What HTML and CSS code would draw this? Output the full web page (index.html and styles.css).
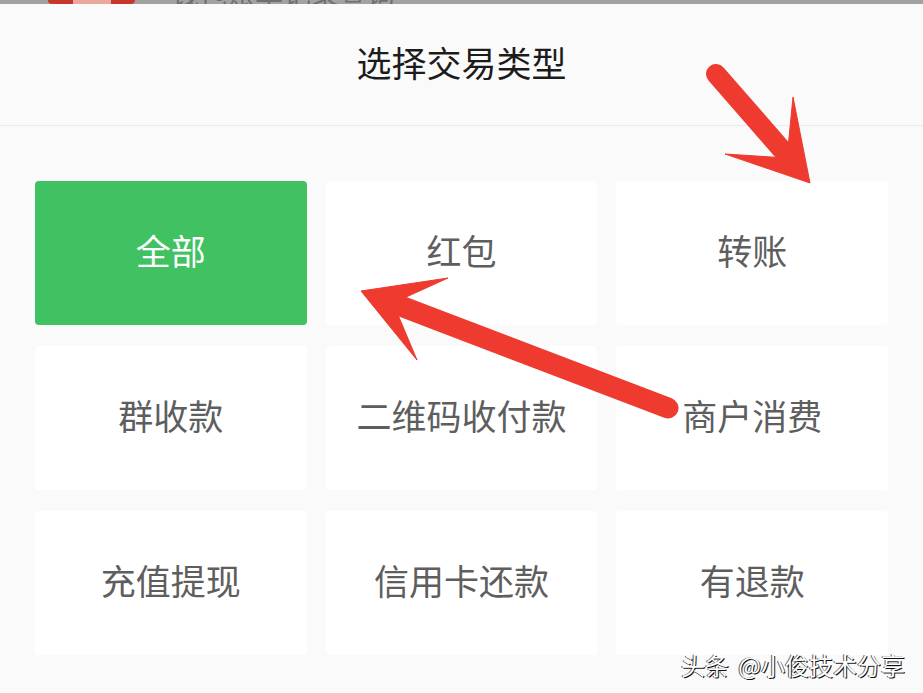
FILE: index.html
```html
<!DOCTYPE html>
<html lang="zh-CN">
<head>
    <meta charset="UTF-8">
    <meta name="viewport" content="width=device-width, initial-scale=1.0">
    <title>选择交易类型</title>
    <link rel="stylesheet" href="styles.css">
</head>
<body>
    <div class="status-strip">
        <div class="app-badge"><span class="app-badge-inner"></span></div>
        <span class="strip-text">钱包账单记录查询</span>
    </div>

    <div class="sheet">
        <div class="sheet-header">
            <h1 class="sheet-title">选择交易类型</h1>
        </div>

        <div class="type-grid">
            <div class="type-cell active">全部</div>
            <div class="type-cell">红包</div>
            <div class="type-cell">转账</div>
            <div class="type-cell">群收款</div>
            <div class="type-cell">二维码收付款</div>
            <div class="type-cell">商户消费</div>
            <div class="type-cell">充值提现</div>
            <div class="type-cell">信用卡还款</div>
            <div class="type-cell">有退款</div>
        </div>
    </div>

    <!-- annotation arrows drawn over the screenshot -->
    <svg class="annotations" viewBox="0 0 923 693" width="923" height="693">
        <g fill="#ee3a2f" stroke="#ee3a2f">
            <line x1="716" y1="74" x2="784" y2="152" stroke-width="20" stroke-linecap="round"/>
            <polygon points="810,183 793,97 787,158 725,154" stroke-width="1" stroke-linejoin="miter"/>
            <line x1="668" y1="408" x2="398" y2="305" stroke-width="21" stroke-linecap="round"/>
            <polygon points="361,291 448,278 393,303 417,360" stroke-width="1" stroke-linejoin="miter"/>
        </g>
    </svg>

    <div class="watermark">头条 @小俊技术分享</div>
</body>
</html>
```

FILE: styles.css
```css
body {
    margin: 0;
    width: 923px;
    height: 693px;
    overflow: hidden;
    position: relative;
    background: #f8f8f8;
    font-family: "Noto Sans CJK SC", "Noto Sans", sans-serif;
}
.status-strip {
    height: 4px;
    background: #a2a2a2;
    overflow: hidden;
    display: flex;
    align-items: flex-end;
    padding-left: 48px;
    gap: 36px;
}
.app-badge {
    flex: none;
    width: 87px;
    height: 30px;
    background: #c7382c;
    border-radius: 4px;
    display: flex;
    justify-content: center;
    align-items: flex-end;
}
.app-badge-inner {
    width: 38px;
    height: 6px;
    background: #e9a7a0;
}
.strip-text {
    font-size: 28px;
    line-height: 28px;
    color: #6f6f6f;
    margin-bottom: -3px;
    white-space: nowrap;
}
.sheet {
    background: #fafafa;
}
.sheet-header {
    height: 122px;
    box-sizing: border-box;
    padding-bottom: 6px;
    border-bottom: 1px solid #ebebeb;
    display: flex;
    align-items: center;
    justify-content: center;
}
.sheet-title {
    margin: 0;
    font-size: 35px;
    font-weight: normal;
    color: #1c1c1c;
}
.type-grid {
    display: grid;
    grid-template-columns: repeat(3, 1fr);
    grid-auto-rows: 144px;
    column-gap: 19px;
    row-gap: 21px;
    padding: 55px 35px 40px;
}
.type-cell {
    background: #fff;
    border-radius: 4px;
    display: flex;
    align-items: center;
    justify-content: center;
    padding-bottom: 7px;
    font-size: 35px;
    color: #5e5e5e;
}
.type-cell.active {
    background: #40c162;
    color: #fff;
}
.annotations {
    position: absolute;
    top: 0;
    left: 0;
    pointer-events: none;
}
.watermark {
    position: absolute;
    right: 18px;
    bottom: 14px;
    font-size: 24px;
    line-height: 28px;
    word-spacing: 4px;
    color: #fff;
    text-shadow: 1px 1px 0 #111, -1px 0 0 #555;
}
```
